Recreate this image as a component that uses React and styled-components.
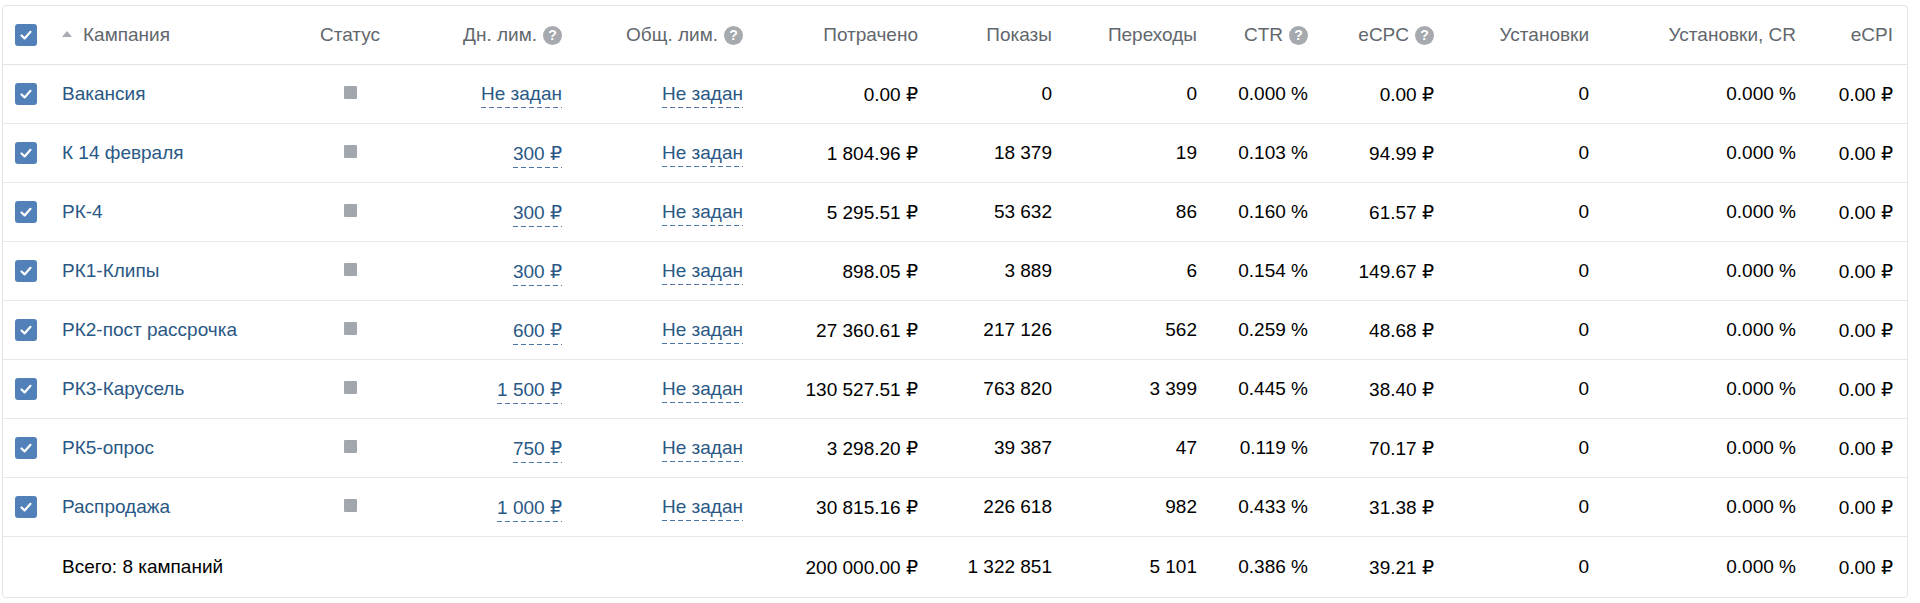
import React from "react";
import styled, { createGlobalStyle } from "styled-components";

const Global = createGlobalStyle`
  html, body { margin: 0; padding: 0; background: #fff; }
  body { font-family: "Liberation Sans", Arial, "DejaVu Sans", sans-serif; }
`;

const Page = styled.div`
  padding: 5px 12px 0 2px;
`;

const Card = styled.div`
  width: 1906px;
  box-sizing: border-box;
  border: 1px solid #e3e4e8;
  border-radius: 4px;
  overflow: hidden;
  background: #fff;
`;

const Table = styled.table`
  width: 1904px;
  table-layout: fixed;
  border-collapse: collapse;
  font-size: 19px;
  color: #000;
`;

const HeadCell = styled.th`
  height: 58px;
  padding: 0 ${(p) => (p.$align === "right" ? "14px" : "0")} 0 ${(p) => (p.$pl || 0)}px;
  text-align: ${(p) => p.$align || "left"};
  font-weight: normal;
  color: #62676d;
  white-space: nowrap;
  border-bottom: 1px solid #e3e4e8;
  vertical-align: middle;
`;

const Cell = styled.td`
  height: 58px;
  padding: 0 ${(p) => (p.$align === "right" ? "14px" : "0")} 0 ${(p) => (p.$pl || 0)}px;
  text-align: ${(p) => p.$align || "left"};
  white-space: nowrap;
  vertical-align: middle;
  border-bottom: 1px solid #e7e8ec;
`;

const FootCell = styled(Cell)`
  height: 60px;
  border-bottom: none;
`;

const HeadInner = styled.span`
  display: inline-flex;
  align-items: center;
  gap: 6px;
`;

const Box = styled.span`
  display: inline-flex;
  align-items: center;
  justify-content: center;
  width: 22px;
  height: 22px;
  border-radius: 3px;
  background: #5181b8;
  vertical-align: middle;
`;

const SortArrow = styled.span`
  display: inline-block;
  width: 0;
  height: 0;
  border-left: 5px solid transparent;
  border-right: 5px solid transparent;
  border-bottom: 6px solid #a8adb3;
  margin-right: 11px;
  vertical-align: 4px;
`;

const HelpIcon = styled.span`
  display: inline-flex;
  align-items: center;
  justify-content: center;
  width: 19px;
  height: 19px;
  border-radius: 50%;
  background: #a6a9ae;
  color: #fff;
  font-size: 14px;
  font-weight: bold;
  line-height: 1;
`;

const StatusSquare = styled.span`
  display: inline-block;
  width: 13px;
  height: 13px;
  border-radius: 1px;
  background: #a2a6ad;
  vertical-align: middle;
  margin-top: -4px;
`;

const Link = styled.a`
  color: #2a5885;
  text-decoration: none;
`;

const DashLink = styled.span`
  color: #2a5885;
  padding-bottom: 4px;
  background-image: linear-gradient(to right, #4a76a8 62%, transparent 0);
  background-size: 8px 1px;
  background-repeat: repeat-x;
  background-position: 0 100%;
`;

const Check = () => (
  <Box>
    <svg width="14" height="14" viewBox="0 0 14 14">
      <polyline
        points="2.5,7.5 5.6,10.4 11.5,3.8"
        fill="none"
        stroke="#fff"
        strokeWidth="2.2"
        strokeLinecap="round"
        strokeLinejoin="round"
      />
    </svg>
  </Box>
);

const cols = [48, 240, 118, 167, 181, 175, 134, 145, 111, 126, 155, 207, 97];

const rows = [
  ["Вакансия", null, null, "0.00 ₽", "0", "0", "0.000 %", "0.00 ₽"],
  ["К 14 февраля", "300 ₽", null, "1 804.96 ₽", "18 379", "19", "0.103 %", "94.99 ₽"],
  ["РК-4", "300 ₽", null, "5 295.51 ₽", "53 632", "86", "0.160 %", "61.57 ₽"],
  ["РК1-Клипы", "300 ₽", null, "898.05 ₽", "3 889", "6", "0.154 %", "149.67 ₽"],
  ["РК2-пост рассрочка", "600 ₽", null, "27 360.61 ₽", "217 126", "562", "0.259 %", "48.68 ₽"],
  ["РК3-Карусель", "1 500 ₽", null, "130 527.51 ₽", "763 820", "3 399", "0.445 %", "38.40 ₽"],
  ["РК5-опрос", "750 ₽", null, "3 298.20 ₽", "39 387", "47", "0.119 %", "70.17 ₽"],
  ["Распродажа", "1 000 ₽", null, "30 815.16 ₽", "226 618", "982", "0.433 %", "31.38 ₽"],
];

const Help = () => <HelpIcon>?</HelpIcon>;

export default function App() {
  return (
    <>
      <Global />
      <Page>
        <Card>
          <Table>
            <colgroup>
              {cols.map((w, i) => (
                <col key={i} style={{ width: w }} />
              ))}
            </colgroup>
            <thead>
              <tr>
                <HeadCell $pl={12}>
                  <Check />
                </HeadCell>
                <HeadCell $pl={11}>
                  <SortArrow />
                  Кампания
                </HeadCell>
                <HeadCell $align="center">Статус</HeadCell>
                <HeadCell $align="right">
                  <HeadInner>
                    Дн. лим. <Help />
                  </HeadInner>
                </HeadCell>
                <HeadCell $align="right">
                  <HeadInner>
                    Общ. лим. <Help />
                  </HeadInner>
                </HeadCell>
                <HeadCell $align="right">Потрачено</HeadCell>
                <HeadCell $align="right">Показы</HeadCell>
                <HeadCell $align="right">Переходы</HeadCell>
                <HeadCell $align="right">
                  <HeadInner>
                    CTR <Help />
                  </HeadInner>
                </HeadCell>
                <HeadCell $align="right">
                  <HeadInner>
                    eCPC <Help />
                  </HeadInner>
                </HeadCell>
                <HeadCell $align="right">Установки</HeadCell>
                <HeadCell $align="right">Установки, CR</HeadCell>
                <HeadCell $align="right">eCPI</HeadCell>
              </tr>
            </thead>
            <tbody>
              {rows.map((r) => (
                <tr key={r[0]}>
                  <Cell $pl={12}>
                    <Check />
                  </Cell>
                  <Cell $pl={11}>
                    <Link href="#">{r[0]}</Link>
                  </Cell>
                  <Cell $align="center">
                    <StatusSquare />
                  </Cell>
                  <Cell $align="right">
                    <DashLink>{r[1] || "Не задан"}</DashLink>
                  </Cell>
                  <Cell $align="right">
                    <DashLink>{r[2] || "Не задан"}</DashLink>
                  </Cell>
                  <Cell $align="right">{r[3]}</Cell>
                  <Cell $align="right">{r[4]}</Cell>
                  <Cell $align="right">{r[5]}</Cell>
                  <Cell $align="right">{r[6]}</Cell>
                  <Cell $align="right">{r[7]}</Cell>
                  <Cell $align="right">0</Cell>
                  <Cell $align="right">0.000 %</Cell>
                  <Cell $align="right">0.00 ₽</Cell>
                </tr>
              ))}
            </tbody>
            <tfoot>
              <tr>
                <FootCell />
                <FootCell $pl={11}>Всего: 8 кампаний</FootCell>
                <FootCell />
                <FootCell />
                <FootCell />
                <FootCell $align="right">200 000.00 ₽</FootCell>
                <FootCell $align="right">1 322 851</FootCell>
                <FootCell $align="right">5 101</FootCell>
                <FootCell $align="right">0.386 %</FootCell>
                <FootCell $align="right">39.21 ₽</FootCell>
                <FootCell $align="right">0</FootCell>
                <FootCell $align="right">0.000 %</FootCell>
                <FootCell $align="right">0.00 ₽</FootCell>
              </tr>
            </tfoot>
          </Table>
        </Card>
      </Page>
    </>
  );
}
